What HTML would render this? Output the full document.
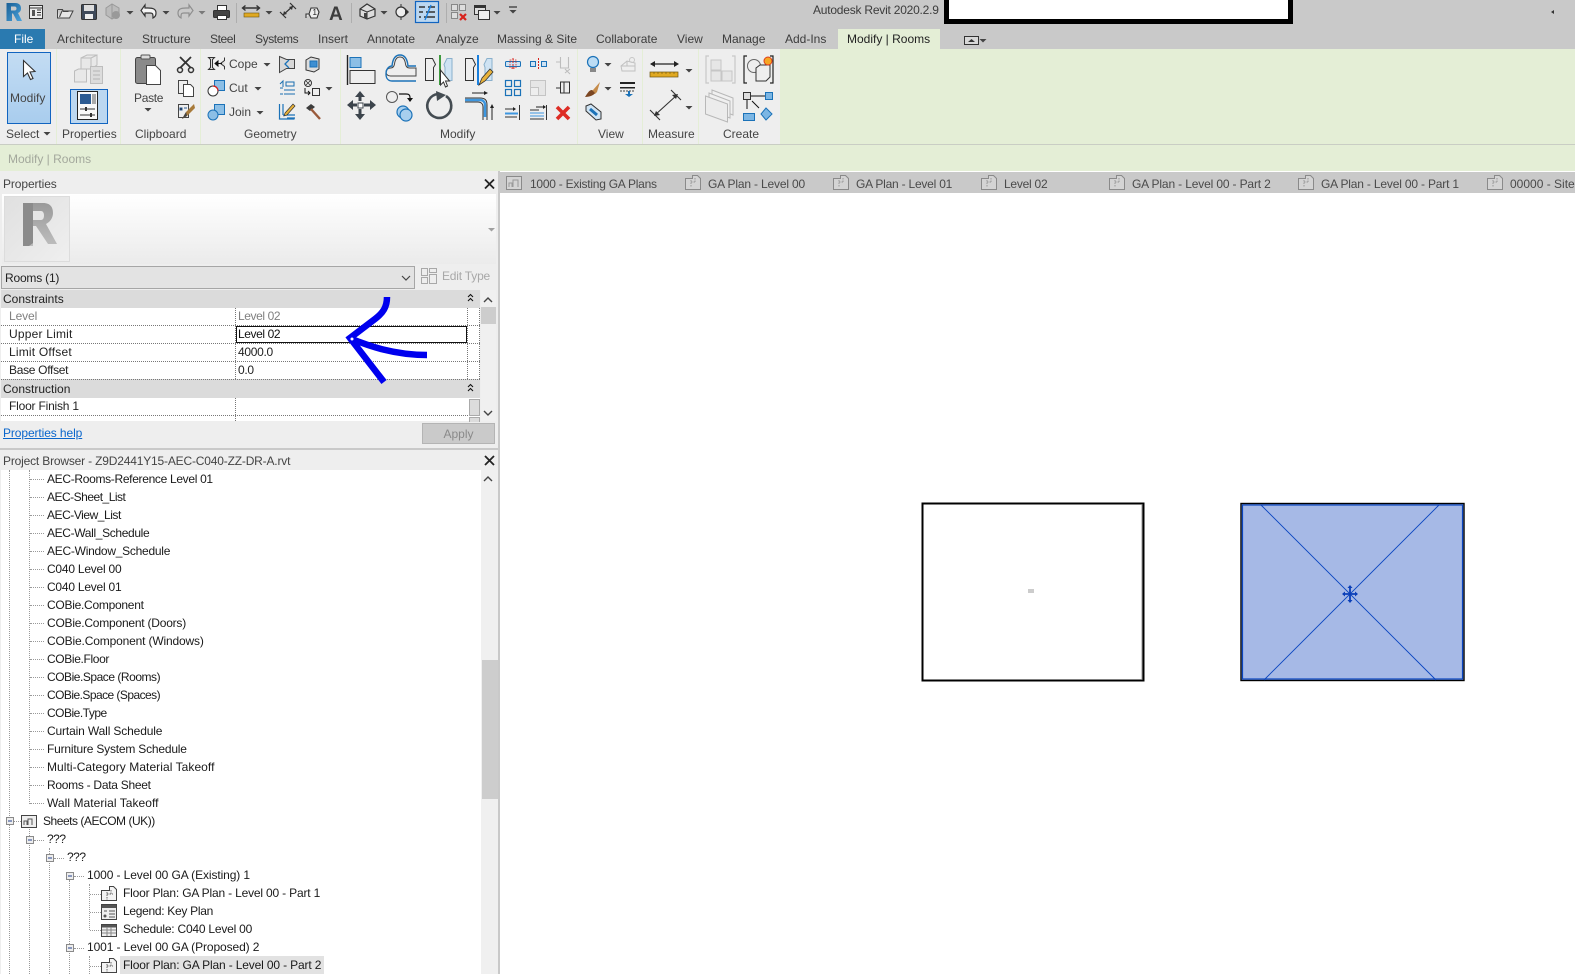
<!DOCTYPE html>
<html><head><meta charset="utf-8"><title>Autodesk Revit 2020.2.9</title>
<style>
html,body{margin:0;padding:0;width:1575px;height:974px;overflow:hidden;background:#fff}
body{position:relative;font-family:"Liberation Sans",sans-serif;font-size:12px;color:#222}
.r{position:absolute}
.t{position:absolute;white-space:nowrap;line-height:16px;height:16px}
.tab{color:#3c3c3c}
.lb{color:#444}
.g{color:#8a8a8a}
.tree{color:#1a1a1a}
.dl{position:absolute;border-top:1px dotted #777;height:0}
.dv{position:absolute;border-left:1px dotted #777;width:0}
.tl{position:absolute;border-top:1px dotted #999;height:0}
.tv{position:absolute;border-left:1px dotted #999;width:0}
svg{position:absolute;left:0;top:0}
</style></head><body>
<!-- chrome backgrounds -->
<div class="r" style="left:0;top:0;width:1575px;height:49px;background:#c9c9c9"></div>
<div class="r" style="left:0;top:29px;width:45px;height:20px;background:#2a7ab0"></div>
<div class="r" style="left:838px;top:29px;width:102px;height:20px;background:#e4eed6"></div>
<div class="r" style="left:0;top:49px;width:1575px;height:122px;background:#e4eed6"></div>
<div class="r" style="left:0;top:49px;width:780px;height:95px;background:#eeeeee"></div>
<div class="r" style="left:0;top:144px;width:1575px;height:1px;background:#c9cdc4"></div>
<div class="r" style="left:56px;top:49px;width:1px;height:95px;background:#e4eed6"></div>
<div class="r" style="left:120px;top:49px;width:1px;height:95px;background:#e4eed6"></div>
<div class="r" style="left:200px;top:49px;width:1px;height:95px;background:#e4eed6"></div>
<div class="r" style="left:340px;top:49px;width:1px;height:95px;background:#e4eed6"></div>
<div class="r" style="left:577px;top:49px;width:1px;height:95px;background:#e4eed6"></div>
<div class="r" style="left:642px;top:49px;width:1px;height:95px;background:#e4eed6"></div>
<div class="r" style="left:698px;top:49px;width:1px;height:95px;background:#e4eed6"></div>
<!-- black box in title -->
<div class="r" style="left:944px;top:0;width:339px;height:19px;background:#fff;border:solid #000;border-width:0 5px 5px 5px"></div>
<div class="t" style="left:813px;top:2px;color:#3c3c3c;letter-spacing:-.22px">Autodesk Revit 2020.2.9</div>
<!-- tabs -->
<div class="t" style="left:14px;top:31px;color:#fff">File</div>
<div class="t tab" style="left:57px;top:31px;letter-spacing:.15px">Architecture</div>
<div class="t tab" style="left:142px;top:31px">Structure</div>
<div class="t tab" style="left:210px;top:31px;letter-spacing:-.4px">Steel</div>
<div class="t tab" style="left:255px;top:31px;letter-spacing:-.4px">Systems</div>
<div class="t tab" style="left:318px;top:31px">Insert</div>
<div class="t tab" style="left:367px;top:31px">Annotate</div>
<div class="t tab" style="left:436px;top:31px">Analyze</div>
<div class="t tab" style="left:497px;top:31px">Massing &amp; Site</div>
<div class="t tab" style="left:596px;top:31px">Collaborate</div>
<div class="t tab" style="left:677px;top:31px">View</div>
<div class="t tab" style="left:722px;top:31px">Manage</div>
<div class="t tab" style="left:785px;top:31px">Add-Ins</div>
<div class="t tab" style="left:847px;top:31px;color:#222">Modify | Rooms</div>
<!-- ribbon selected buttons -->
<div class="r" style="left:7px;top:52px;width:42px;height:70px;background:linear-gradient(#c3dcf3,#a9cdee);border:1px solid #1164c0"></div>
<div class="r" style="left:70px;top:89px;width:36px;height:33px;background:#bcd7f0;border:1px solid #1164c0"></div>
<!-- ribbon labels -->
<div class="t lb" style="left:10px;top:90px">Modify</div>
<div class="t lb" style="left:6px;top:126px">Select</div>
<div class="t lb" style="left:62px;top:126px">Properties</div>
<div class="t lb" style="left:134px;top:90px;letter-spacing:-.3px">Paste</div>
<div class="t lb" style="left:135px;top:126px">Clipboard</div>
<div class="t lb" style="left:229px;top:56px">Cope</div>
<div class="t lb" style="left:229px;top:80px">Cut</div>
<div class="t lb" style="left:229px;top:104px">Join</div>
<div class="t lb" style="left:244px;top:126px">Geometry</div>
<div class="t lb" style="left:440px;top:126px">Modify</div>
<div class="t lb" style="left:598px;top:126px">View</div>
<div class="t lb" style="left:648px;top:126px">Measure</div>
<div class="t lb" style="left:723px;top:126px">Create</div>
<div class="t" style="left:8px;top:151px;color:#a3a89c">Modify | Rooms</div>
<!-- view tab bar -->
<div class="r" style="left:500px;top:172px;width:1075px;height:21px;background:#c9c9c9"></div>
<div class="t g" style="left:530px;top:176px;color:#4a4a4a;letter-spacing:-.25px">1000 - Existing GA Plans</div>
<div class="t g" style="left:708px;top:176px;color:#4a4a4a;letter-spacing:-.17px">GA Plan - Level 00</div>
<div class="t g" style="left:856px;top:176px;color:#4a4a4a;letter-spacing:-.22px">GA Plan - Level 01</div>
<div class="t g" style="left:1004px;top:176px;color:#4a4a4a;letter-spacing:-.25px">Level 02</div>
<div class="t g" style="left:1132px;top:176px;color:#4a4a4a;letter-spacing:-.15px">GA Plan - Level 00 - Part 2</div>
<div class="t g" style="left:1321px;top:176px;color:#4a4a4a;letter-spacing:-.18px">GA Plan - Level 00 - Part 1</div>
<div class="t g" style="left:1510px;top:176px;color:#4a4a4a">00000 - Site</div>
<!-- left column -->
<div class="r" style="left:0;top:171px;width:498px;height:803px;background:#eeeeee"></div>
<div class="r" style="left:498px;top:171px;width:2px;height:803px;background:#c9c9c9"></div>
<div class="t" style="left:3px;top:176px;color:#444;letter-spacing:-.1px">Properties</div>
<div class="r" style="left:2px;top:194px;width:494px;height:70px;background:linear-gradient(#ffffff,#ebebeb)"></div>
<div class="r" style="left:4px;top:196px;width:64px;height:64px;background:linear-gradient(135deg,#e0e0e0,#efefef);border:1px solid #dcdcdc"></div>
<div class="r" style="left:1px;top:266px;width:412px;height:21px;background:#e3e3e3;border:1px solid #a6a6a6"></div>
<div class="t" style="left:5px;top:270px;color:#222;letter-spacing:-.2px">Rooms (1)</div>
<div class="t" style="left:442px;top:268px;color:#a8a8a8;letter-spacing:-.2px">Edit Type</div>
<!-- property grid -->
<div class="r" style="left:1px;top:290px;width:479px;height:131px;background:#fff"></div>
<div class="r" style="left:1px;top:290px;width:479px;height:18px;background:#dbdbdb"></div>
<div class="r" style="left:1px;top:379px;width:479px;height:19px;background:#dbdbdb"></div>
<div class="t" style="left:3px;top:291px">Constraints</div>
<div class="t" style="left:3px;top:381px">Construction</div>
<div class="dl" style="left:1px;top:325px;width:479px"></div>
<div class="dl" style="left:1px;top:343px;width:479px"></div>
<div class="dl" style="left:1px;top:361px;width:479px"></div>
<div class="dl" style="left:1px;top:379px;width:479px"></div>
<div class="dl" style="left:1px;top:415px;width:479px"></div>
<div class="dv" style="left:235px;top:308px;height:71px"></div>
<div class="dv" style="left:235px;top:398px;height:23px"></div>
<div class="dv" style="left:467px;top:308px;height:71px"></div>
<div class="dv" style="left:479px;top:308px;height:71px"></div>
<div class="t" style="left:9px;top:308px;color:#808080;letter-spacing:-.1px">Level</div>
<div class="t" style="left:238px;top:308px;color:#808080;letter-spacing:-.4px">Level 02</div>
<div class="t" style="left:9px;top:326px;letter-spacing:.2px">Upper Limit</div>
<div class="r" style="left:236px;top:326px;width:229px;height:15px;border:1.5px solid #111"></div>
<div class="t" style="left:238px;top:326px;color:#111;letter-spacing:-.4px">Level 02</div>
<div class="t" style="left:9px;top:344px;letter-spacing:.2px">Limit Offset</div>
<div class="t" style="left:238px;top:344px;letter-spacing:-.3px">4000.0</div>
<div class="t" style="left:9px;top:362px;letter-spacing:-.3px">Base Offset</div>
<div class="t" style="left:238px;top:362px;letter-spacing:-.3px">0.0</div>
<div class="t" style="left:9px;top:398px;letter-spacing:-.2px">Floor Finish 1</div>
<div class="r" style="left:481px;top:290px;width:15px;height:131px;background:#f0f0f0"></div>
<div class="r" style="left:481px;top:307px;width:15px;height:17px;background:#cdcdcd"></div>
<div class="r" style="left:469px;top:399px;width:9px;height:15px;background:#dcdcdc;border:1px solid #aaa"></div>
<div class="r" style="left:469px;top:417px;width:9px;height:4px;background:#dcdcdc;border:1px solid #aaa;border-bottom:0"></div>
<div class="t" style="left:3px;top:425px;color:#0a66cc;text-decoration:underline;letter-spacing:-.1px">Properties help</div>
<div class="r" style="left:422px;top:423px;width:71px;height:19px;background:#cacaca;border:1px solid #b4b4b4;color:#8a8a8a;text-align:center;line-height:21px">Apply</div>
<div class="r" style="left:0;top:448px;width:498px;height:2px;background:#c9c9c9"></div>
<div class="t" style="left:3px;top:453px;color:#444;letter-spacing:-.18px">Project Browser - Z9D2441Y15-AEC-C040-ZZ-DR-A.rvt</div>
<!-- browser -->
<div class="r" style="left:1px;top:470px;width:480px;height:504px;background:#fff"></div>
<div class="r" style="left:481px;top:470px;width:17px;height:504px;background:#f0f0f0"></div>
<div class="r" style="left:482px;top:660px;width:16px;height:139px;background:#cdcdcd"></div>
<div class="r" style="left:120px;top:956px;width:204px;height:18px;background:#e2e2e2"></div>
<div class="tv" style="left:9px;top:470px;height:504px"></div>
<div class="tv" style="left:29px;top:470px;height:334px"></div>
<div class="tl" style="left:30px;top:479px;width:14px"></div>
<div class="tl" style="left:30px;top:497px;width:14px"></div>
<div class="tl" style="left:30px;top:515px;width:14px"></div>
<div class="tl" style="left:30px;top:533px;width:14px"></div>
<div class="tl" style="left:30px;top:551px;width:14px"></div>
<div class="tl" style="left:30px;top:569px;width:14px"></div>
<div class="tl" style="left:30px;top:587px;width:14px"></div>
<div class="tl" style="left:30px;top:605px;width:14px"></div>
<div class="tl" style="left:30px;top:623px;width:14px"></div>
<div class="tl" style="left:30px;top:641px;width:14px"></div>
<div class="tl" style="left:30px;top:659px;width:14px"></div>
<div class="tl" style="left:30px;top:677px;width:14px"></div>
<div class="tl" style="left:30px;top:695px;width:14px"></div>
<div class="tl" style="left:30px;top:713px;width:14px"></div>
<div class="tl" style="left:30px;top:731px;width:14px"></div>
<div class="tl" style="left:30px;top:749px;width:14px"></div>
<div class="tl" style="left:30px;top:767px;width:14px"></div>
<div class="tl" style="left:30px;top:785px;width:14px"></div>
<div class="tl" style="left:30px;top:803px;width:14px"></div>
<div class="tl" style="left:13px;top:821px;width:8px"></div>
<div class="tv" style="left:29px;top:826px;height:148px"></div>
<div class="tl" style="left:34px;top:840px;width:10px"></div>
<div class="tv" style="left:49px;top:848px;height:126px"></div>
<div class="tl" style="left:54px;top:858px;width:10px"></div>
<div class="tv" style="left:69px;top:880px;height:94px"></div>
<div class="tl" style="left:74px;top:876px;width:10px"></div>
<div class="tl" style="left:74px;top:948px;width:10px"></div>
<div class="tv" style="left:89px;top:884px;height:46px"></div>
<div class="tv" style="left:89px;top:956px;height:18px"></div>
<div class="tl" style="left:90px;top:894px;width:11px"></div>
<div class="tl" style="left:90px;top:912px;width:11px"></div>
<div class="tl" style="left:90px;top:930px;width:11px"></div>
<div class="tl" style="left:90px;top:966px;width:11px"></div>
<div class="t tree" style="left:47px;top:471px;letter-spacing:-.32px">AEC-Rooms-Reference Level 01</div>
<div class="t tree" style="left:47px;top:489px;letter-spacing:-.5px">AEC-Sheet_List</div>
<div class="t tree" style="left:47px;top:507px;letter-spacing:-.46px">AEC-View_List</div>
<div class="t tree" style="left:47px;top:525px;letter-spacing:-.35px">AEC-Wall_Schedule</div>
<div class="t tree" style="left:47px;top:543px;letter-spacing:-.26px">AEC-Window_Schedule</div>
<div class="t tree" style="left:47px;top:561px;letter-spacing:-.23px">C040 Level 00</div>
<div class="t tree" style="left:47px;top:579px;letter-spacing:-.23px">C040 Level 01</div>
<div class="t tree" style="left:47px;top:597px;letter-spacing:-.27px">COBie.Component</div>
<div class="t tree" style="left:47px;top:615px;letter-spacing:-.22px">COBie.Component (Doors)</div>
<div class="t tree" style="left:47px;top:633px;letter-spacing:-.16px">COBie.Component (Windows)</div>
<div class="t tree" style="left:47px;top:651px;letter-spacing:-.36px">COBie.Floor</div>
<div class="t tree" style="left:47px;top:669px;letter-spacing:-.47px">COBie.Space (Rooms)</div>
<div class="t tree" style="left:47px;top:687px;letter-spacing:-.55px">COBie.Space (Spaces)</div>
<div class="t tree" style="left:47px;top:705px;letter-spacing:-.5px">COBie.Type</div>
<div class="t tree" style="left:47px;top:723px;letter-spacing:-.14px">Curtain Wall Schedule</div>
<div class="t tree" style="left:47px;top:741px;letter-spacing:-.2px">Furniture System Schedule</div>
<div class="t tree" style="left:47px;top:759px;letter-spacing:.06px">Multi-Category Material Takeoff</div>
<div class="t tree" style="left:47px;top:777px;letter-spacing:-.28px">Rooms - Data Sheet</div>
<div class="t tree" style="left:47px;top:795px;letter-spacing:.05px">Wall Material Takeoff</div>
<div class="t tree" style="left:43px;top:813px;letter-spacing:-.47px">Sheets (AECOM (UK))</div>
<div class="t tree" style="left:47px;top:831px;letter-spacing:-.5px">???</div>
<div class="t tree" style="left:67px;top:849px;letter-spacing:-.5px">???</div>
<div class="t tree" style="left:87px;top:867px;letter-spacing:-.1px">1000 - Level 00 GA (Existing) 1</div>
<div class="t tree" style="left:123px;top:885px;letter-spacing:-.18px">Floor Plan: GA Plan - Level 00 - Part 1</div>
<div class="t tree" style="left:123px;top:903px;letter-spacing:-.3px">Legend: Key Plan</div>
<div class="t tree" style="left:123px;top:921px;letter-spacing:-.22px">Schedule: C040 Level 00</div>
<div class="t tree" style="left:87px;top:939px;letter-spacing:-.1px">1001 - Level 00 GA (Proposed) 2</div>
<div class="t tree" style="left:123px;top:957px;letter-spacing:-.15px">Floor Plan: GA Plan - Level 00 - Part 2</div>

<svg width="1575" height="974" viewBox="0 0 1575 974" xmlns="http://www.w3.org/2000/svg">
<defs>
<path id="c" d="M-3.5 0h7l-3.500 3.500z" fill="#444"/>
<g id="pl" fill="none"><path d="M.5 3.500h7v-3h5l3 3v11h-15z" stroke="#8a8a8a" fill="#d4d4d4"/><path d="M6 5v7M6 7h5M10 3v4" stroke="#999" stroke-dasharray="1.500 1"/></g>
<g id="pd" fill="none"><path d="M.5 4.500h8v-4h4l3 3v11h-15z" stroke="#444" fill="#f4f4f4"/><path d="M6 6v8M6 8h6M10 4v4" stroke="#666" stroke-dasharray="1.500 1"/></g>
<g id="ex"><rect x=".5" y=".5" width="7" height="7" fill="#eee" stroke="#8a8a8a"/><path d="M2 4h4" stroke="#24408c"/></g>
<path id="x" d="M0 0l9 9M9 0l-9 9" stroke="#222" stroke-width="1.800" fill="none"/>
<linearGradient id="rg" x1="0" y1="0" x2="0" y2="1"><stop offset="0" stop-color="#9a9a9a"/><stop offset="1" stop-color="#bdbdbd"/></linearGradient>
<linearGradient id="bl" x1="0" y1="0" x2="1" y2="1"><stop offset="0" stop-color="#1a5f95"/><stop offset="1" stop-color="#4aa3dc"/></linearGradient>
</defs>
<!-- toolbar -->
<path d="M6.500 3h8.500c5 0 6 3 6 5.500 0 2.500-1.500 4-3 4.500l4 8h-5l-4-7.500h-1v7.500h-5.500z" fill="url(#bl)"/><path d="M11 6.500v4h3.500c1.500 0 2-1 2-2s-.5-2-2-2z" fill="#c9c9c9"/>
<rect x="29.500" y="5.500" width="13" height="13" fill="#eee" stroke="#333"/><path d="M30 8h12M37 10h4M37 12.500h4M37 15h4" stroke="#333"/><rect x="32" y="10" width="3" height="6" fill="#555"/>
<path d="M57.500 9.500v8.500h12l3.500-7h-11l-2.500 6M57.500 9.500h5l1 2h5" fill="#e6e6e6" stroke="#444"/>
<rect x="81.500" y="4.500" width="15" height="15" rx="1" fill="#3f4a5a" stroke="#333"/><rect x="84" y="5" width="10" height="6" fill="#ddd"/><rect x="85" y="14" width="8" height="5" fill="#eee"/>
<path d="M106 8l6-4 7 4v7l-7 4-6-4zM112 4v15" fill="#bbb" stroke="#999"/><circle cx="116" cy="15" r="4" fill="#999"/>
<use href="#c" x="130" y="11"/>
<path d="M148 8h-3v-3l-4 5.500 4 5.500v-3h5c3 0 3 1 3 5 2-1 3-3 3-5 0-4-3-5-8-5z" fill="#f4f4f4" stroke="#333" stroke-width="1.200"/>
<use href="#c" x="166" y="11"/>
<path d="M186 8h3v-3l4 5.500-4 5.500v-3h-5c-3 0-3 1-3 5-2-1-3-3-3-5 0-4 3-5 8-5z" fill="none" stroke="#8f8f8f" stroke-width="1.200"/>
<use href="#c" x="202" y="11" opacity=".6"/>
<rect x="217.500" y="5.500" width="9" height="5" fill="#fff" stroke="#333"/><rect x="213.500" y="10.500" width="16" height="7" rx="1" fill="#444" stroke="#333"/><rect x="217.500" y="15.500" width="9" height="4" fill="#fff" stroke="#333"/>
<rect x="236" y="3" width="1" height="20" fill="#aeaeae"/>
<path d="M243 8h16M245.500 5.500l-3 2.500 3 2.500M256.500 5.500l3 2.500-3 2.500" stroke="#333" fill="none" stroke-width="1.400"/><rect x="244" y="13" width="15" height="4" fill="#e0a921" stroke="#6d5510" stroke-width=".6"/>
<use href="#c" x="269" y="11"/>
<path d="M283 15l10-9M280 12l6 6M290 3l6 6" stroke="#333" stroke-width="1.200" fill="none"/><path d="M283 15l4-1-3-3zM293 6l-4 1 3 3z" fill="#333"/>
<path d="M306 18v-4h3M309 14l2-6h6l2 4-2 6h-6z" fill="#eee" stroke="#333" stroke-width="1.100"/><text x="312.500" y="15" font-size="8" fill="#222" font-family="Liberation Sans">1</text>
<text x="329" y="20" font-size="19" font-weight="700" fill="#3c3c3c" font-family="Liberation Sans">A</text>
<rect x="351" y="3" width="1" height="20" fill="#aeaeae"/>
<path d="M360 9l7-5 8 5v7l-8 3-7-3z" fill="#ddd" stroke="#333" stroke-width="1.200"/><path d="M360 9l7 3 8-3M367 12v7" stroke="#333" fill="none"/><rect x="364" y="13" width="3" height="5" fill="#444"/>
<use href="#c" x="384" y="11"/>
<circle cx="401" cy="12" r="5" fill="#eee" stroke="#333" stroke-width="1.200"/><path d="M405 8l4 4-4 4z" fill="#333"/><path d="M401 4v3M401 17v3" stroke="#333"/>
<rect x="415.500" y="1.500" width="23" height="21" fill="#bcd7f0" stroke="#1164c0" stroke-width="1.200"/>
<path d="M419 7h6M419 12h4M419 17h2M428 7h7M426 12h9M424 17h11" stroke="#333" stroke-width="1.600" fill="none"/><path d="M431 5l-6 15" stroke="#1a7fdc" stroke-width="1.400"/>
<rect x="446" y="3" width="1" height="20" fill="#aeaeae"/>
<path d="M451.500 4.500h6v6h-6zM459.500 4.500h6v6h-6zM451.500 12.500h6v6h-6z" fill="#ddd" stroke="#888"/><path d="M460 14l6 6M466 14l-6 6" stroke="#d8221c" stroke-width="2.200"/>
<rect x="474.500" y="5.500" width="11" height="9" fill="#ddd" stroke="#333"/><rect x="474.500" y="5.500" width="11" height="2.500" fill="#333"/><rect x="478.500" y="10.500" width="11" height="9" fill="#eee" stroke="#333"/>
<use href="#c" x="497" y="11"/>
<path d="M509 7h8" stroke="#444" stroke-width="1.400"/><use href="#c" x="513" y="10"/>
<path d="M1565 12v-4l-3 2z" transform="translate(-11 2)" fill="#333"/>
<!-- Ribbon: select / properties -->
<path d="M23.500 60.500v16l4-3.500 3 6.500 2.500-1-3-6.500 5-.5z" fill="#fff" stroke="#333" stroke-width="1.100"/>
<use href="#c" x="47" y="132"/>
<g fill="#e8e8e8" stroke="#bdbdbd"><path d="M81 58l6-3h10l-6 3zM81 58h10v11h-10zM91 58l6-3v10l-6 4z"/><path d="M74.500 71l4-2h8v13h-12z"/></g><rect x="90.500" y="66.500" width="12" height="17" fill="#dcdcdc" stroke="#bdbdbd"/><path d="M93 71h7M93 75h7M93 79h7" stroke="#b5b5b5"/>
<rect x="77.500" y="91.500" width="20" height="28" fill="#f8f8f8" stroke="#222"/><rect x="80" y="94" width="11" height="10" fill="#2c5b92"/><rect x="92" y="94" width="4" height="10" fill="#aaa"/><path d="M80 109h15M80 115h15" stroke="#333"/><rect x="85" y="107" width="2" height="4" fill="#333"/><rect x="90" y="113" width="2" height="4" fill="#333"/>
<!-- clipboard -->
<rect x="135.500" y="57.500" width="20" height="26" rx="2" fill="#8a8a8a" stroke="#444"/><rect x="141" y="55" width="9" height="4" rx="1" fill="#ddd" stroke="#555"/><path d="M146.500 65.500h9l5 5v14h-14z" fill="#fff" stroke="#444"/>
<use href="#c" x="148" y="108"/>
<path d="M180 57l11 11M191 57l-11 11" stroke="#333" stroke-width="1.800"/><circle cx="180" cy="70" r="2.500" fill="none" stroke="#333" stroke-width="1.500"/><circle cx="191" cy="70" r="2.500" fill="none" stroke="#333" stroke-width="1.500"/>
<path d="M178.500 80.500h9v13h-9z" fill="#eee" stroke="#444"/><path d="M183.500 84.500h7l3 3v9h-10z" fill="#fff" stroke="#444"/>
<rect x="178.500" y="104.500" width="10" height="13" fill="#eee" stroke="#444"/><path d="M180 108h2v2h-2z M184 108h3" stroke="#2c5b92"/><path d="M194 104l-8 8-4 7 5-3 8-8z" fill="#a87a3a"/><path d="M186 112l-4 7 5-3z" fill="#444"/>
<!-- geometry -->
<path d="M208.500 57.500h6l-2 2v8l2 2h-6l2-2v-8zM224.500 57.500v3l-4 3 4 3v3" fill="#ddd" stroke="#333"/><path d="M222 63.500h-7M215 63.500l3-2.500v5z" stroke="#111" fill="#111"/>
<use href="#c" x="267" y="63"/><use href="#c" x="258" y="87"/><use href="#c" x="260" y="111"/>
<rect x="214.500" y="80.500" width="10" height="10" fill="#8cbfe6" stroke="#1b72b8"/><circle cx="213" cy="91" r="5" fill="#fff" stroke="#333"/><path d="M213 86a5 5 0 0 1 5 5" stroke="#d8221c" fill="none" stroke-width="1.200"/>
<rect x="214.500" y="104.500" width="10" height="10" fill="#8cbfe6" stroke="#1b72b8"/><circle cx="213" cy="115" r="5" fill="#8cbfe6" stroke="#1b72b8"/>
<path d="M279.500 56.500l7 3h8v9h-8l-7 4z" fill="#d8d8d8" stroke="#444"/><path d="M289 60l-4 4 4 4" stroke="#1b72b8" fill="none" stroke-width="1.300"/>
<path d="M280 84l3-3v6M283 88h-3M286 82h8v4h-8zM284 90h11M284 94h11M280 94h3" stroke="#1b6fb0" fill="none"/>
<path d="M279.500 104v15h15M283 104v11M287 118h8M283 115h12" stroke="#1b72b8" fill="none" stroke-width="1.200"/><path d="M285 113l8-9 2 2-8 9-3 1z" fill="#e8b23a" stroke="#333" stroke-width=".7"/>
<path d="M306 60l5-3 8 2v10l-5 3-8-2z" fill="#ddd" stroke="#333"/><rect x="310" y="61" width="7" height="6" fill="#3e8fd2" stroke="#1b72b8"/>
<circle cx="308" cy="83" r="3.500" fill="none" stroke="#333"/><path d="M306 81l4 4M310 81l-4 4" stroke="#333" stroke-width=".8"/><rect x="312.500" y="88.500" width="7" height="7" fill="#eee" stroke="#333"/><path d="M305 88v5h5M308 91l2 2-2 2" stroke="#111" fill="none"/>
<use href="#c" x="329" y="87"/>
<path d="M306 108l5-4 4 3-5 4z" fill="#3c3c3c"/><path d="M311 109l9 10" stroke="#9a5a3a" stroke-width="2.400"/>
<!-- modify large -->
<path d="M347.500 55v30" stroke="#222" stroke-width="1.400"/><rect x="350" y="57.500" width="11" height="10" fill="#8cbfe6" stroke="#1b72b8"/><rect x="350" y="70.500" width="25" height="13" fill="#eee" stroke="#333"/>
<path d="M390.500 68c2 0 3.500-1 4-4 .5-4 2-7 5.500-7s5 3 5.500 7c.5 3 2 4 4 4h6.500v8h-25.500c-3 0-4.500-2-4.500-4s2-4 4.500-4z" fill="#eee" stroke="#444"/><path d="M416 81h-24c-4 0-6-3-6-7 0-5 3-8 6-8 .5-5 2-11 8-11s7.500 6 8 11h8" fill="none" stroke="#1b72b8" stroke-width="1.400"/>
<path d="M425.500 58.500h7l3 6-2 3v13h-8z" fill="#eee" stroke="#333"/><path d="M440 55v30" stroke="#3f9a3f" stroke-width="2"/><path d="M452 58.500h-5l-3 6 1 3v13h7z" fill="#cfe3f3" stroke="#8ab0cc"/><path d="M440.500 70v15l3-3 2 5 2-1-2-5h4z" fill="#fff" stroke="#333"/>
<path d="M465.500 58.500h7l3 6-2 3v13h-8z" fill="#eee" stroke="#333"/><path d="M478 55v30" stroke="#1a7fdc" stroke-width="2"/><path d="M492 58.500h-5l-3 6 1 3v13h7z" fill="#cfe3f3" stroke="#8ab0cc"/><path d="M479 85l3-7 8-9 3 3-8 9z" fill="#e8b23a" stroke="#333" stroke-width=".8"/>
<path d="M360 91l5 6h-10zM360 120l5-6h-10zM347 105l6-5v10zM376 105l-6-5v10z" fill="#3c444c"/><path d="M353 105h4M364 105h6M360 97v4M360 109v5" stroke="#3c444c" stroke-width="3"/><rect x="358" y="103" width="5" height="5" fill="#fff" stroke="#3c444c"/>
<circle cx="392" cy="97" r="5.500" fill="#eee" stroke="#555"/><path d="M399 94h7c3 0 4 1 4 4" fill="none" stroke="#111" stroke-width="1.200"/><path d="M407 98h6l-3 4z" fill="#111"/><circle cx="403" cy="112" r="6" fill="#a8cfee" stroke="#1b72b8" stroke-width="1.200"/><circle cx="406" cy="115" r="6" fill="#a8cfee" stroke="#1b72b8" stroke-width="1.200"/>
<path d="M446 96a12 12 0 1 1-8-2" fill="none" stroke="#444c52" stroke-width="2.600"/><path d="M436 91l10 4-9 6z" fill="#444c52"/>
<path d="M465 98h15c5 0 7 2 7 7v15M465 102h13c2 0 5 1 5 5v13" fill="none" stroke="#333"/><path d="M465 100h15c3 0 5 2 5 5v12" fill="none" stroke="#3e97e0" stroke-width="2.500"/><path d="M472 93h12M492 120v-12" stroke="#222"/><path d="M484 91l4 2-4 2zM490 108l2-4 2 4z" fill="#222"/>
<!-- modify small -->
<rect x="505.500" y="61.500" width="15" height="5" rx="1" fill="#cfe3f3" stroke="#1b72b8"/><path d="M513 58v12" stroke="#d8221c" stroke-dasharray="2 1"/><rect x="510" y="60" width="6" height="8" fill="none" stroke="#d8221c" stroke-dasharray="1.500 1" stroke-width=".8"/>
<rect x="530.500" y="61.500" width="5" height="5" fill="#cfe3f3" stroke="#1b72b8"/><rect x="541.500" y="61.500" width="5" height="5" fill="#cfe3f3" stroke="#1b72b8"/><path d="M538.500 58v12" stroke="#d8221c" stroke-dasharray="2 1"/>
<path d="M556 62h4M560.500 57v11h8v-11M570 69l-5 4M565 69l5 5" stroke="#bdbdbd" fill="none" stroke-width="1.100"/>
<g fill="none" stroke="#1b72b8" stroke-width="1.200"><rect x="505.500" y="80.500" width="6" height="6"/><rect x="514.500" y="80.500" width="6" height="6"/><rect x="505.500" y="89.500" width="6" height="6"/><rect x="514.500" y="89.500" width="6" height="6"/></g>
<rect x="530.500" y="80.500" width="15" height="15" fill="#e6e6e6" stroke="#c4c4c4"/><rect x="530.500" y="87.500" width="8" height="8" fill="#eee" stroke="#c4c4c4"/>
<path d="M556 88h4M560.500 82h9v11h-9zM564 82v11" fill="none" stroke="#333"/>
<path d="M505 109h8M505 113h12M505 117h12M519.500 105v15" fill="none" stroke="#333"/><path d="M505 113.500h13" stroke="#3e97e0" stroke-width="2"/><path d="M513 107l3 2-3 2z" fill="#222"/>
<path d="M530 110h9M530 113h14M530 116h14M530 119h14M546.500 105v15" fill="none" stroke="#333"/><path d="M530 113h14M530 116h14" stroke="#3e97e0"/><path d="M536 107h7" stroke="#222"/><path d="M543 105l3 2-3 2z" fill="#222"/>
<path d="M557 107l12 12M569 107l-12 12" stroke="#dd2c24" stroke-width="3.600"/>
<!-- view -->
<circle cx="593" cy="62" r="5.500" fill="#bcdcf4" stroke="#1b72b8" stroke-width="1.200"/><rect x="590" y="68" width="6" height="4" fill="#888"/>
<use href="#c" x="608" y="63"/><use href="#c" x="608" y="87"/>
<path d="M621 66l6-5 8 2v8h-13z M627 61v5M621 66h14" fill="none" stroke="#c0c0c0"/><circle cx="632" cy="60" r="2.500" fill="none" stroke="#c6c6c6"/>
<path d="M600 82l-7 8-2 1 4 3 2-2z" fill="#c58b4a"/><path d="M592 90c-3 0-5 4-7 7 5 0 9-2 10-4z" fill="#7b4622"/>
<path d="M620 82h15v2h-15zM620 87h15v1.500h-15z" fill="#222"/><path d="M620 91h15" stroke="#444" stroke-dasharray="2 1"/><path d="M628 91v3h-3l4 3 4-3h-3v-3z" fill="#1b72b8"/>
<path d="M586 106l5-2 10 8v7l-5 1-10-9z" fill="#cfe3f3" stroke="#333"/><path d="M590 109l7 6" stroke="#1b72b8" stroke-width="3"/>
<!-- measure -->
<path d="M651 64h26" stroke="#222" stroke-width="1.200"/><path d="M650 64l5-3v6zM679 64l-5-3v6z" fill="#222"/><rect x="650" y="72" width="28" height="5" fill="#e0a921" stroke="#6d5510" stroke-width=".7"/><path d="M654 72v2M658 72v2M662 72v2M666 72v2M670 72v2M674 72v2" stroke="#6d5510" stroke-width=".6"/>
<use href="#c" x="689" y="69"/><use href="#c" x="689" y="106"/>
<path d="M655 115l22-20M650 110l10 10M671 90l10 10" stroke="#333" fill="none" stroke-width="1.100"/><path d="M654 116l6-1-4-4zM678 94l-6 1 4 4z" fill="#333"/>
<!-- create -->
<path d="M709 56h-3v27h3M732 56h3v27h-3" fill="none" stroke="#c8c8c8" stroke-width="1.200"/><g fill="#e6e6e6" stroke="#c6c6c6"><rect x="711" y="60" width="10" height="10"/><rect x="711" y="71" width="10" height="10"/><rect x="722" y="71" width="10" height="10"/></g>
<path d="M747 56h-3v27h3M770 56h3v27h-3" fill="none" stroke="#222" stroke-width="1.200"/><circle cx="754" cy="66" r="6.500" fill="#eee" stroke="#666"/><path d="M756 68l4-3h10v12l-4 4h-10z" fill="#eee" stroke="#333"/><circle cx="768" cy="61" r="4" fill="#f5a623" stroke="#dd3c1c"/>
<path d="M712 90l21 8v17l-21-8z" fill="#f0f0f0" stroke="#b8b8b8"/><path d="M709 93l21 8v17l-21-8z" fill="#f0f0f0" stroke="#b8b8b8"/><path d="M705.500 96l22 8v18l-22-8z" fill="#ececec" stroke="#b8b8b8"/>
<rect x="743.500" y="92.500" width="7" height="7" fill="#ddd" stroke="#333"/><rect x="765.500" y="92.500" width="7" height="7" fill="#7cb6e4" stroke="#1b72b8"/><path d="M751 96h14M747 100v9M752 101l7 7" stroke="#111"/><rect x="743.500" y="113.500" width="11" height="7" fill="#7cb6e4" stroke="#1b72b8"/><path d="M766 108l6 6-6 6-5-6z" fill="#7cb6e4" stroke="#1b72b8"/>
<path d="M964.500 36.500h14v8h-14z" fill="#d8d8d8" stroke="#333"/><path d="M968 42l3.500-3 3.500 3z" fill="#333"/><use href="#c" x="983" y="39"/>
<!-- tab bar icons -->
<rect x="506.500" y="176.500" width="15" height="13" fill="#d4d4d4" stroke="#8a8a8a"/><path d="M509 187v-4h3v4M513 187v-7h5v7" fill="none" stroke="#999"/>
<use href="#pl" x="685" y="175"/><use href="#pl" x="833" y="175"/><use href="#pl" x="981" y="175"/><use href="#pl" x="1109" y="175"/><use href="#pl" x="1298" y="175"/><use href="#pl" x="1487" y="175"/>
<!-- close X -->
<use href="#x" x="485" y="179.500"/><use href="#x" x="485" y="456"/>
<!-- properties misc -->
<path d="M488 228h7l-3.500 3.500z" fill="#a0a0a0"/>
<path d="M23 203h20c8 0 10 5 10 10 0 5-3 9-7 11l11 20h-9l-12-18h-3v20h-10z" fill="url(#rg)"/><path d="M33 211v9h8c2 0 3-2 3-4.500s-1-4.500-3-4.500z" fill="#e6e6e6"/><path d="M23 203v43h6l4-3v-40z" fill="#8b8b8b"/>
<path d="M402 276l4 4 4-4" fill="none" stroke="#444" stroke-width="1.200"/>
<rect x="421.500" y="268.500" width="6" height="7" fill="none" stroke="#a8a8a8"/><rect x="429.500" y="268.500" width="7" height="4" fill="none" stroke="#a8a8a8"/><rect x="421.500" y="277.500" width="6" height="6" fill="none" stroke="#a8a8a8"/><rect x="429.500" y="274.500" width="7" height="9" fill="none" stroke="#a8a8a8"/>
<path d="M468 297l2.500-2.500 2.500 2.500M468 301l2.500-2.500 2.500 2.500M468 387l2.500-2.500 2.500 2.500M468 391l2.500-2.500 2.500 2.500" fill="none" stroke="#111" stroke-width="1.100"/>
<path d="M484 302l4-4 4 4" fill="none" stroke="#444" stroke-width="1.400"/><path d="M484 411l4 4 4-4" fill="none" stroke="#444" stroke-width="1.400"/>
<path d="M484 481l4-4 4 4" fill="none" stroke="#444" stroke-width="1.400"/>
<!-- blue annotation arrow -->
<path d="M387 297c0 10-4 16-12 22l-25 19 34 44" fill="none" stroke="#0000ee" stroke-width="6.500"/>
<path d="M349 338c20 8 45 17 78 17" fill="none" stroke="#0000ee" stroke-width="6.500"/>
<circle cx="352" cy="339" r="1.500" fill="#fff"/>
<!-- tree icons -->
<use href="#ex" x="6" y="817"/><use href="#ex" x="26" y="836"/><use href="#ex" x="46" y="854"/><use href="#ex" x="66" y="872"/><use href="#ex" x="66" y="944"/>
<rect x="21.500" y="815.500" width="15" height="12" fill="#eee" stroke="#444"/><path d="M24 825v-4h3v4M28 825v-6h4v6" fill="none" stroke="#555"/>
<use href="#pd" x="101" y="886"/><use href="#pd" x="101" y="958"/>
<rect x="101.500" y="904.500" width="15" height="15" fill="#eee" stroke="#444"/><rect x="102" y="905" width="14" height="3" fill="#555"/><circle cx="105" cy="916" r="1.500" fill="#555"/><path d="M104 911h3M109 911h6M109 914h6M109 917h6" stroke="#555"/>
<rect x="101.500" y="924.500" width="15" height="12" fill="#eee" stroke="#444"/><rect x="102" y="925" width="14" height="2.500" fill="#555"/><path d="M102 930h14M102 933h14M107 927v9M111 927v9" stroke="#888"/>
<!-- canvas rooms -->
<rect x="922.500" y="503.500" width="221" height="177" fill="#fff" stroke="#000" stroke-width="2"/>
<path d="M1142 505v174" stroke="#999"/>
<path d="M1028 590h6M1028 592h6" stroke="#999"/>
<rect x="1241" y="503.500" width="223" height="177" fill="#a6b9e6" stroke="#000" stroke-width="1.400"/>
<rect x="1242.500" y="505" width="220" height="174" fill="none" stroke="#0a45c0" stroke-width="1.200"/>
<path d="M1261 505l175 175M1439 505l-175 175" stroke="#0a45c0" stroke-width=".9" fill="none"/>
<path d="M1343 594h14M1350 587v14" stroke="#0a3fb8" stroke-width="1.800"/><path d="M1350 585l-2.500 3h5zM1350 603l-2.500-3h5zM1342 594l3-2.500v5zM1358 594l-3-2.500v5z" fill="#0a3fb8"/>
</svg>
</body></html>
